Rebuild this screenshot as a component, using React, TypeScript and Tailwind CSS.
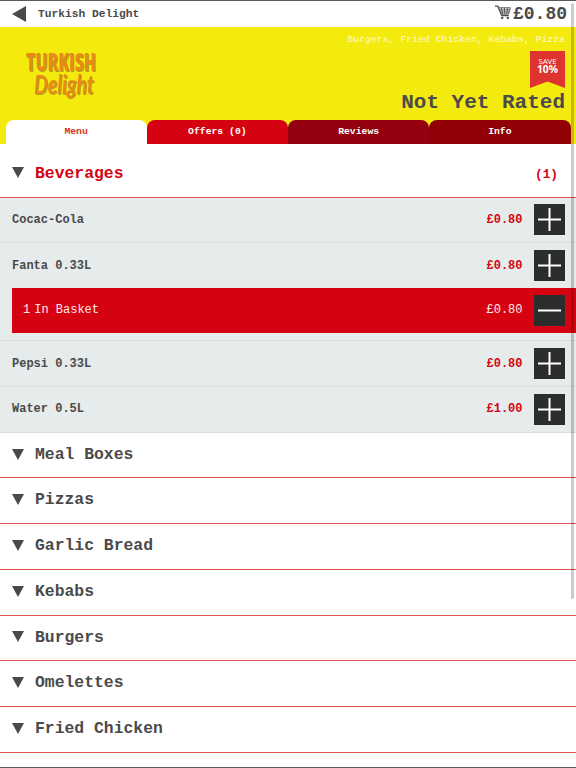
import { useState } from "react";
import clsx from "clsx";

type MenuItem = {
  name: string;
  price: string;
  inBasket?: number;
};

const tabs = [
  { label: "Menu", className: "bg-white text-[#dc2f26]" },
  { label: "Offers (0)", className: "bg-[#d50212] text-white" },
  { label: "Reviews", className: "bg-[#94000f] text-white" },
  { label: "Info", className: "bg-[#900004] text-white" }
];

const beverages: MenuItem[] = [
  { name: "Cocac-Cola", price: "£0.80" },
  { name: "Fanta 0.33L", price: "£0.80", inBasket: 1 },
  { name: "Pepsi 0.33L", price: "£0.80" },
  { name: "Water 0.5L", price: "£1.00" }
];

const categories = ["Meal Boxes", "Pizzas", "Garlic Bread", "Kebabs", "Burgers", "Omelettes", "Fried Chicken"];

export default function App() {
  const [open, setOpen] = useState(true);

  return (
    <main className="relative flex h-[768px] w-[576px] flex-col overflow-hidden border-y border-[#5a5a5a] bg-white font-['Liberation_Mono',monospace] text-[#4a4a4a]">
      <header className="flex h-[26px] shrink-0 items-center pr-[9px] pl-3">
        <svg className="h-4 w-3.5" viewBox="0 0 14 16" aria-label="Back">
          <path d="M0 8 14 0v16z" fill="#4a4a4a" />
        </svg>
        <h1 className="ml-3 text-[11.25px] font-bold">Turkish Delight</h1>
        <CartIcon />
        <span className="ml-0.5 text-[18px] leading-[26px] font-bold">£0.80</span>
      </header>

      <section className="flex h-[117px] shrink-0 flex-col bg-[#f5ea0e]">
        <div className="flex h-[93px] justify-between pr-[11px] pl-[25px]">
          <Logo />
          <div className="flex flex-col items-end">
            <p className="mt-[6px] text-[9.8px] leading-[14px] text-[#fdfbc8]">Burgers, Fried Chicken, Kebabs, Pizza</p>
            <SaveRibbon />
            <p className="text-[21px] leading-[29px] font-bold">Not Yet Rated</p>
          </div>
        </div>
        <nav className="flex h-6 pr-[5.5px] pl-[5.5px]">
          {tabs.map((tab) => (
            <button key={tab.label} type="button" className={clsx("h-6 flex-1 rounded-t-[8px] text-[9.75px] leading-6 font-bold", tab.className)}>
              {tab.label}
            </button>
          ))}
        </nav>
      </section>

      <button
        type="button"
        className="flex h-[53.5px] shrink-0 items-center border-b border-[#e05450] pt-[7px] pr-[18px] pl-3 text-[#d50212]"
        onClick={() => setOpen(!open)}
      >
        <Triangle />
        <span className="mt-px ml-[11px] text-[16.4px] font-bold">Beverages</span>
        <span className="mt-px ml-auto text-[12.8px] font-bold">(1)</span>
      </button>

      {open ? (
        <ul className="shrink-0 bg-[#e6ebeb]">
          {beverages.map((item) => (
            <li key={item.name} className={clsx("border-b border-[#dadfe0]", item.inBasket && "pb-[7.5px]")}>
              <div className="flex h-[44.7px] items-center pr-[11.5px] pl-3">
                <span className="text-[12px] font-bold">{item.name}</span>
                <span className="mr-[11px] ml-auto text-[12px] font-bold text-[#d50212]">{item.price}</span>
                <SquareButton kind="plus" />
              </div>
              {item.inBasket ? (
                <div className="ml-3 flex h-[45px] items-center bg-[#d50212] pr-[11.5px] pl-[11px] text-[12px] text-[#ffe9e9]">
                  <span>{item.inBasket}</span>
                  <span className="ml-1">In Basket</span>
                  <span className="mr-[11px] ml-auto">{item.price}</span>
                  <SquareButton kind="minus" />
                </div>
              ) : null}
            </li>
          ))}
        </ul>
      ) : null}

      {categories.map((name) => (
        <div key={name} className="flex h-[45.7px] shrink-0 items-center border-b border-[#e05450] pl-3">
          <Triangle />
          <span className="ml-[11px] text-[16.4px] font-bold">{name}</span>
        </div>
      ))}

      <div className="absolute top-0.5 right-[2px] h-[596px] w-[3px] rounded-full bg-black/20" />
    </main>
  );
}

function Triangle() {
  return (
    <svg className="mb-0.5 h-[11px] w-3" viewBox="0 0 12 11">
      <path d="M0 0h12L6 11z" fill="#4a4a4a" />
    </svg>
  );
}

function SquareButton({ kind }: { kind: "plus" | "minus" }) {
  return (
    <button type="button" aria-label={kind === "plus" ? "Add" : "Remove"} className="size-[31px] bg-[#2c2e2e]">
      <svg viewBox="0 0 31 31" className="size-[31px]" stroke="#fff" strokeWidth="2">
        <path d="M4 15.5h23" />
        {kind === "plus" ? <path d="M15.5 4v23" /> : null}
      </svg>
    </button>
  );
}

function CartIcon() {
  return (
    <svg className="mb-[3px] ml-auto h-[15px] w-4" viewBox="0 0 16 15" fill="none" stroke="#4a4a4a">
      <path d="M0 1.200h2.800l4 9.500h7" strokeWidth="1.300" />
      <path d="M3.500 2.800h11.900l-1.900 6.300H6.100M4.200 4.900h10.600M5.100 7h9.100M6.400 2.800l1.300 6.300M9.400 2.800l.5 6.300M12.500 2.800l-.7 6.300" strokeWidth=".9" />
      <circle cx="7.200" cy="12.900" r="1.200" fill="#4a4a4a" stroke="none" />
      <circle cx="12.800" cy="12.900" r="1.200" fill="#4a4a4a" stroke="none" />
    </svg>
  );
}

function SaveRibbon() {
  return (
    <svg className="mt-1 h-[37px] w-[35px]" viewBox="0 0 35 37">
      <path d="M0 0h35v37l-17.500-6.500L0 37z" fill="#df332f" />
      <text x="17.500" y="12.500" textAnchor="middle" fill="#fff" fontFamily="Open Sans, sans-serif" fontSize="8" textLength="18" lengthAdjust="spacingAndGlyphs">
        SAVE
      </text>
      <text x="17.500" y="22" textAnchor="middle" fill="#fff" fontFamily="Noto Sans, sans-serif" fontWeight="700" fontSize="10.500" textLength="21" lengthAdjust="spacingAndGlyphs">
        10%
      </text>
    </svg>
  );
}

function Logo() {
  return (
    <svg className="mt-[20px] h-[60px] w-[76px] overflow-visible drop-shadow-[1px_1px_0_#b3a018]" viewBox="0 0 76 60" aria-label="Turkish Delight" fill="#e98a16">
      <text x="1" y="23.500" fontFamily="Open Sans, sans-serif" fontWeight="800" fontSize="25" textLength="70" lengthAdjust="spacingAndGlyphs">
        TURKISH
      </text>
      <text x="9" y="47" fontFamily="Lato, sans-serif" fontStyle="italic" fontWeight="700" fontSize="26" textLength="60" lengthAdjust="spacingAndGlyphs">
        Delight
      </text>
    </svg>
  );
}
